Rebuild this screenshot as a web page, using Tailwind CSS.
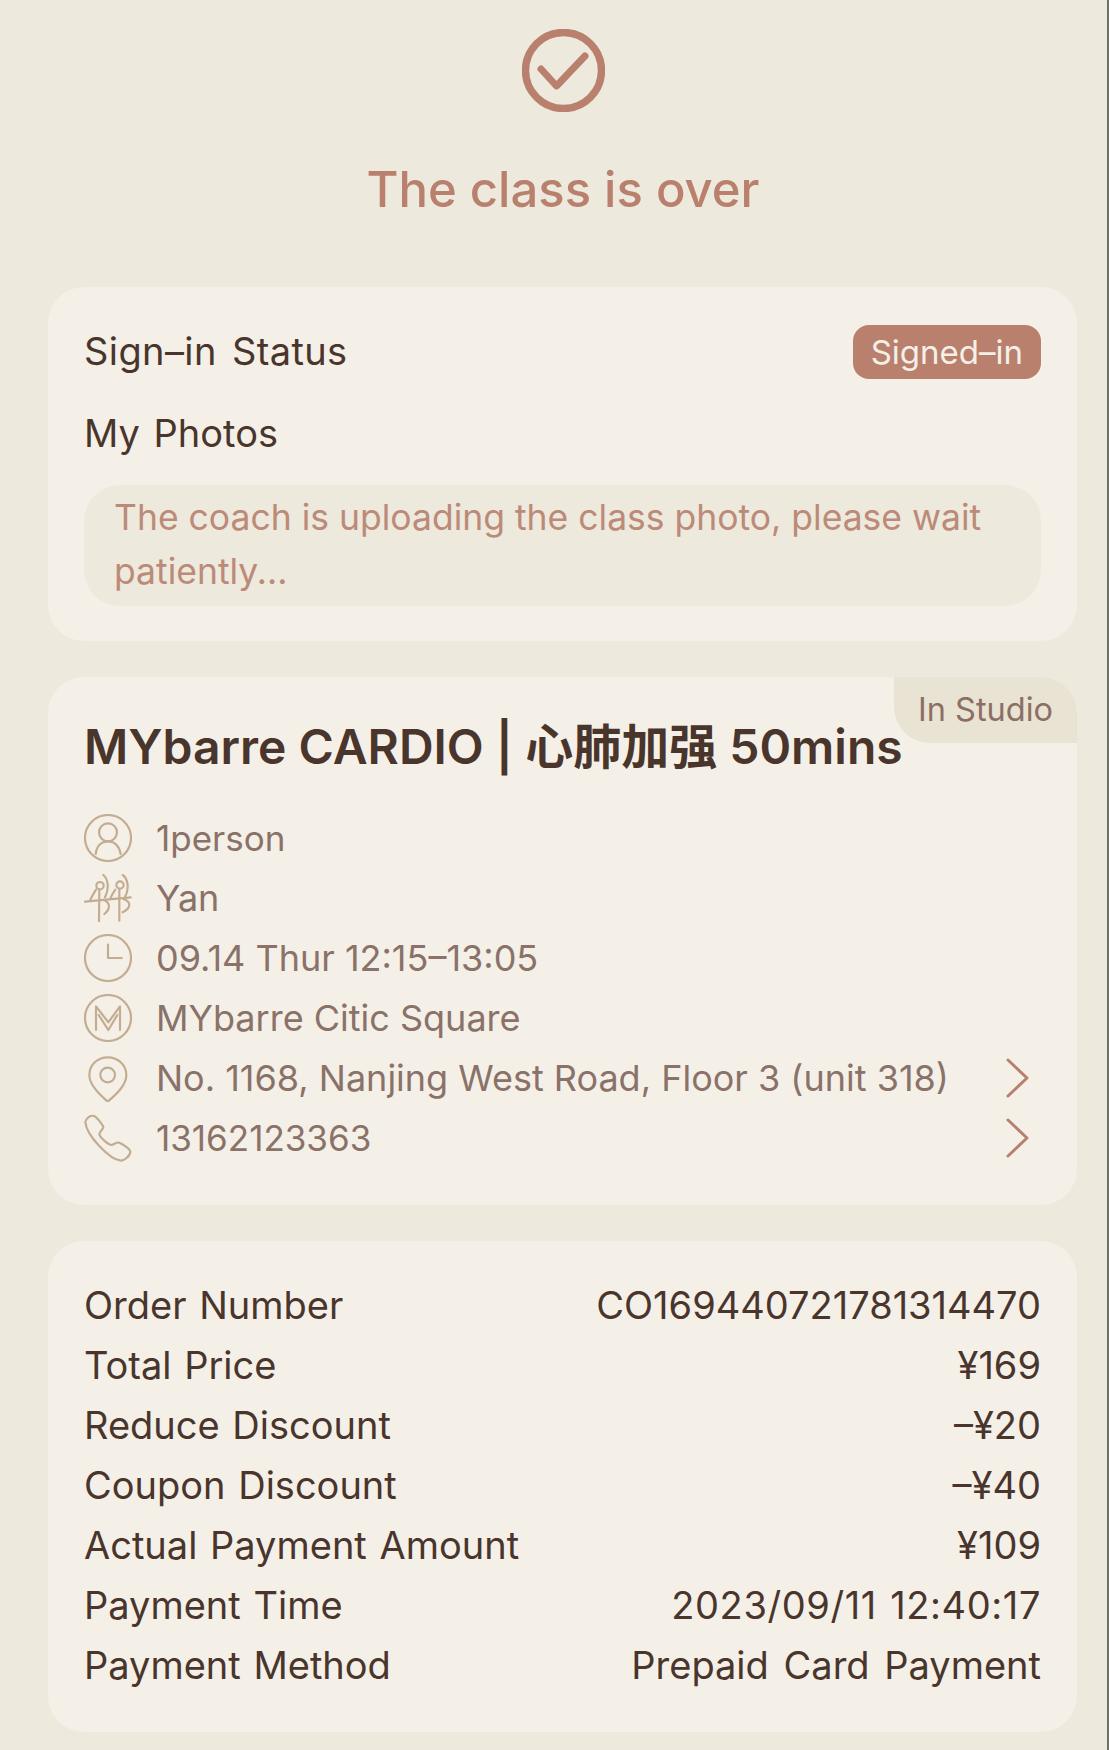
<!DOCTYPE html>
<html lang="en">
<head>
<meta charset="UTF-8">
<title>Class detail</title>
<script src="https://cdn.jsdelivr.net/npm/@tailwindcss/browser@4"></script>
</head>
<body class="bg-[#ede9dd]">
<div class="h-[1750px] overflow-hidden border-r-2 border-[#6f6f66] font-['Inter','Noto_Sans_CJK_SC',sans-serif] text-[#4a352c]">

  <!-- header -->
  <div class="flex flex-col items-center pt-[29px] pl-[19px]">
    <svg class="w-[83px] h-[83px]" viewBox="0 0 83 83" fill="none" stroke="#b9806e" stroke-linecap="round" stroke-linejoin="round">
      <circle cx="41.5" cy="41.5" r="38" stroke-width="7.5"/>
      <path d="M19 40 L34.5 57 L63 27" stroke-width="7"/>
    </svg>
    <h1 class="mt-[50px] h-[56px] leading-[56px] text-[49px] font-medium text-[#b9806e]">The class is over</h1>
  </div>

  <!-- sign-in card -->
  <section class="mt-[69px] mx-[48px] w-[1029px] h-[354px] rounded-[36px] bg-[#f4f0e8] px-[36px] pt-[37px]">
    <div class="flex items-center justify-between h-[54px]">
      <span class="text-[38px] [word-spacing:4px] tracking-[0.4px]">Sign–in Status</span>
      <span class="mt-[2px] h-[54px] leading-[54px] px-[18px] rounded-[16px] bg-[#b9806e] text-[#f4f0e8] text-[33px]">Signed–in</span>
    </div>
    <div class="mt-[28px] h-[54px] leading-[54px] text-[38px] [word-spacing:3px]">My Photos</div>
    <div class="mt-[25px] h-[121px] rounded-[36px] bg-[#ede9dd] px-[30px] py-[6px] text-[35.5px] leading-[54px] text-[#bc8a78]">The coach is uploading the class photo, please wait patiently...</div>
  </section>

  <!-- class card -->
  <section class="relative mt-[36px] mx-[48px] w-[1029px] h-[528px] rounded-[36px] bg-[#f4f0e8] px-[36px] pt-[40px]">
    <span class="absolute top-0 right-0 w-[183px] h-[66px] rounded-tr-[36px] rounded-bl-[36px] bg-[#e9e3d4] text-[32.5px] leading-[66px] text-center text-[#8c6f64]">In Studio</span>
    <h2 class="h-[60px] leading-[60px] text-[48px] font-semibold whitespace-nowrap">MYbarre CARDIO | 心肺加强 50mins</h2>
    <ul class="mt-[31px] text-[36px] text-[#8a7268]">
      <li class="flex items-center h-[60px] gap-[24px]">
        <svg class="w-[48px] h-[48px]" viewBox="72 45 144 144" fill="none" stroke="#c3ac8f" stroke-width="6.5" stroke-linecap="round"><circle cx="144" cy="117" r="69"/><circle cx="144" cy="100" r="27"/><path d="M107 165 C110 140 125 127 144 127 C163 127 178 140 182 165"/></svg>
        <span class="text-[35px]">1person</span>
      </li>
      <li class="flex items-center h-[60px] gap-[24px]">
        <svg class="w-[48px] h-[48px]" viewBox="72 225 144 144" fill="none" stroke="#c3ac8f" stroke-width="6.5" stroke-linecap="round"><circle cx="120" cy="260" r="11"/><circle cx="180" cy="258" r="11"/><path d="M130 228 C145 240 148 270 135 295"/><path d="M188 228 C205 240 208 270 195 295"/><path d="M75 308 L212 295"/><path d="M118 272 L117 367"/><path d="M178 272 L178 365"/><path d="M108 272 C100 285 94 295 90 305"/><path d="M166 272 C158 283 154 292 150 300"/><path d="M130 303 C152 310 152 330 133 345"/><path d="M190 300 C215 308 213 328 188 340"/></svg>
        <span>Yan</span>
      </li>
      <li class="flex items-center h-[60px] gap-[24px]">
        <svg class="w-[48px] h-[48px]" viewBox="72 405 144 144" fill="none" stroke="#c3ac8f" stroke-width="6.5" stroke-linecap="round" stroke-linejoin="round"><circle cx="144" cy="477" r="69"/><path d="M144 437 L144 477 L185 477"/></svg>
        <span>09.14 Thur 12:15–13:05</span>
      </li>
      <li class="flex items-center h-[60px] gap-[24px]">
        <svg class="w-[48px] h-[48px]" viewBox="72 45 144 144" fill="none" stroke="#c3ac8f" stroke-width="6.5" stroke-linecap="round" stroke-linejoin="round"><circle cx="144" cy="117" r="69"/><path d="M108 153 L108 82 L145 130 L180 82 L180 153"/><path d="M116 108 L145 153 L172 108"/></svg>
        <span>MYbarre Citic Square</span>
      </li>
      <li class="flex items-center h-[60px] gap-[24px]">
        <svg class="w-[48px] h-[48px]" viewBox="72 222 144 144" fill="none" stroke="#c3ac8f" stroke-width="6.5" stroke-linejoin="round"><path d="M143 232 C175 232 199 256 199 286 C199 315 170 342 143 365 C116 342 88 315 88 286 C88 256 111 232 143 232 Z"/><circle cx="143" cy="285" r="22"/></svg>
        <span class="flex-1 whitespace-nowrap">No. 1168, Nanjing West Road, Floor 3 (unit 318)</span>
        <svg class="w-[24px] h-[40px] mr-[12px]" viewBox="0 0 24 40" fill="none" stroke="#b9806e" stroke-width="3" stroke-linecap="round" stroke-linejoin="round"><path d="M3 2 L22 20 L3 38"/></svg>
      </li>
      <li class="flex items-center h-[60px] gap-[24px]">
        <svg class="w-[48px] h-[48px]" viewBox="72 405 144 144" fill="none" stroke="#c3ac8f" stroke-width="6.5" stroke-linejoin="round"><path d="M76 428 C80 416 92 408 102 411 C110 414 126 434 130 444 C131 450 118 458 118 466 C120 476 146 498 154 498 C162 497 170 488 178 491 C190 496 210 510 211 518 C211 530 192 546 182 545 C150 542 78 470 76 428 Z"/></svg>
        <span class="flex-1 text-[35px]">13162123363</span>
        <svg class="w-[24px] h-[40px] mr-[12px]" viewBox="0 0 24 40" fill="none" stroke="#b9806e" stroke-width="3" stroke-linecap="round" stroke-linejoin="round"><path d="M3 2 L22 20 L3 38"/></svg>
      </li>
    </ul>
  </section>

  <!-- order card -->
  <section class="mt-[36px] mx-[48px] w-[1029px] h-[491px] rounded-[36px] bg-[#f4f0e8] px-[36px] pt-[34px] text-[38px] [word-spacing:2px]">
    <div class="flex items-center justify-between h-[60px]"><span>Order Number</span><span>CO169440721781314470</span></div>
    <div class="flex items-center justify-between h-[60px]"><span>Total Price</span><span>¥169</span></div>
    <div class="flex items-center justify-between h-[60px]"><span>Reduce Discount</span><span>–¥20</span></div>
    <div class="flex items-center justify-between h-[60px]"><span>Coupon Discount</span><span>–¥40</span></div>
    <div class="flex items-center justify-between h-[60px]"><span>Actual Payment Amount</span><span>¥109</span></div>
    <div class="flex items-center justify-between h-[60px]"><span>Payment Time</span><span class="tracking-[0.6px]">2023/09/11 12:40:17</span></div>
    <div class="flex items-center justify-between h-[60px]"><span>Payment Method</span><span class="[word-spacing:4px]">Prepaid Card Payment</span></div>
  </section>
</div>
</body>
</html>
